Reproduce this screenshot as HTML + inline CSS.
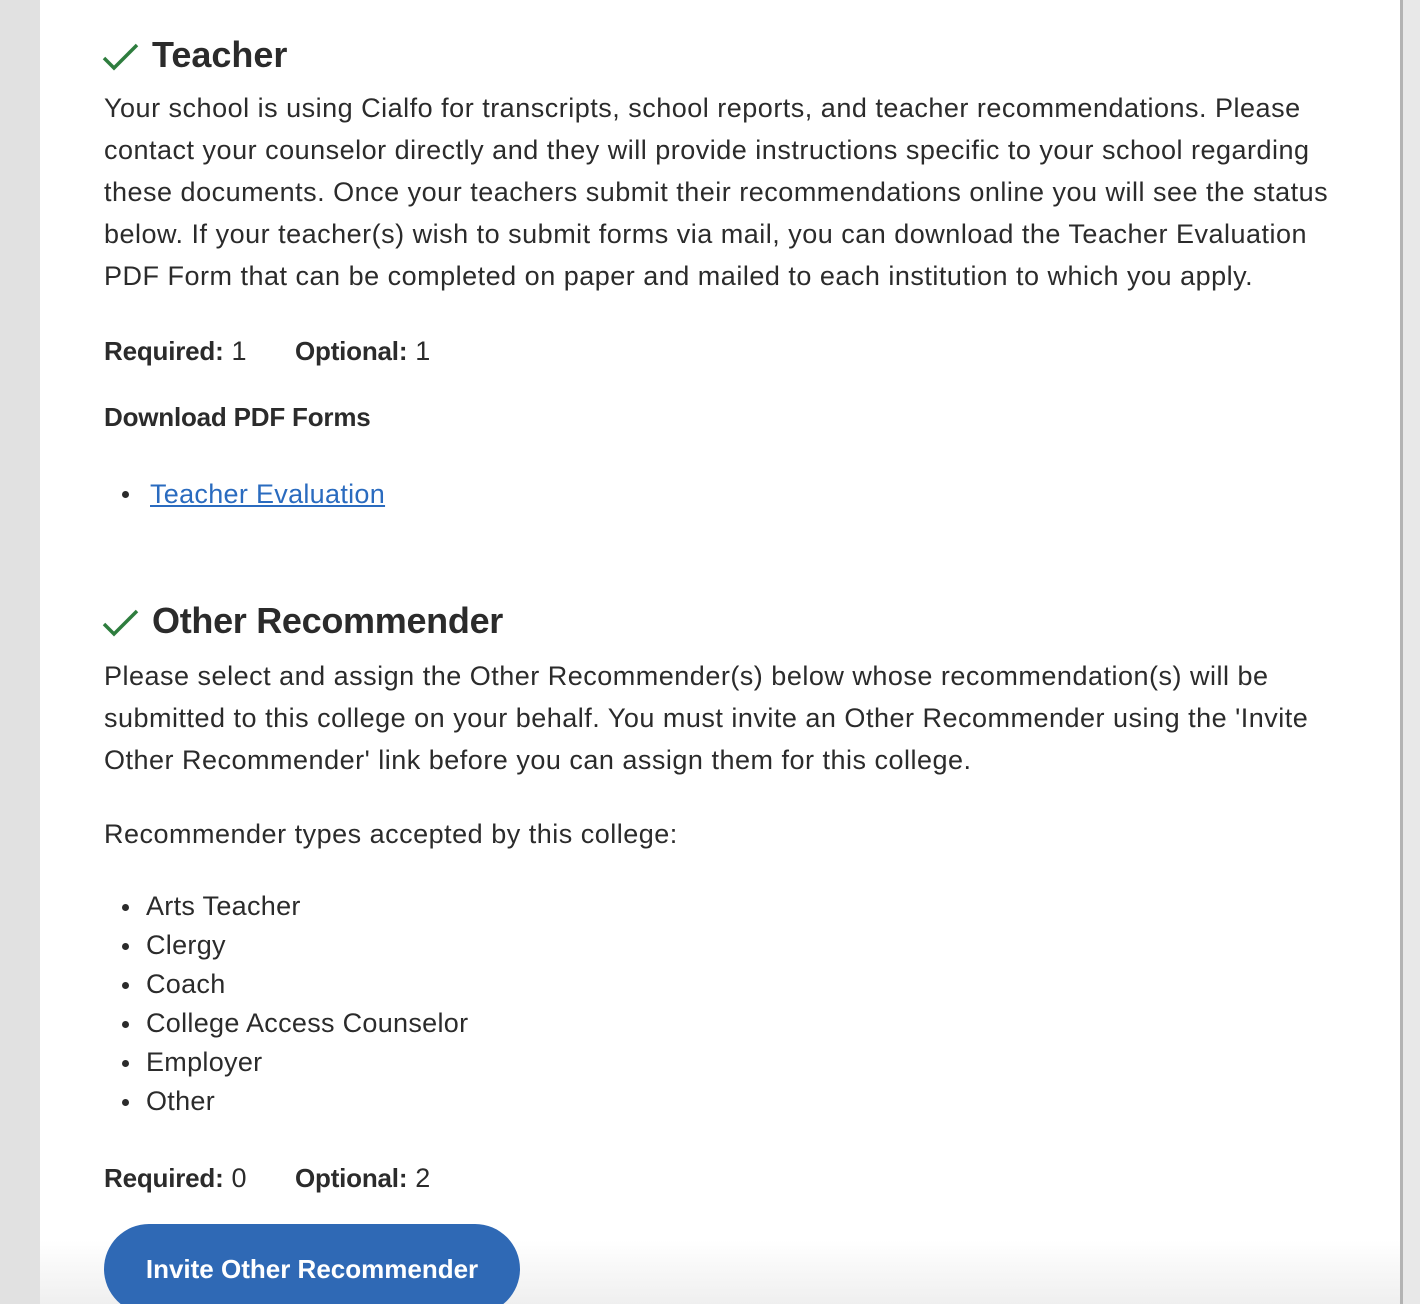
<!DOCTYPE html>
<html style="overflow:hidden"><head><meta charset="utf-8"><style>
*{margin:0;padding:0;box-sizing:border-box}
html,body{width:1420px;height:1304px;overflow:hidden}
body{background:#e8e8e8;font-family:"Liberation Sans",Arial,sans-serif;color:#2b2b2b;position:relative}
.l{position:absolute;left:0;width:40px;top:0;height:1304px;background:#e1e1e1}
.m{position:absolute;left:40px;width:1360px;top:0;height:1304px;background:linear-gradient(#fff 0,#fff 1240px,#efefef 1304px)}
.r{position:absolute;left:1400px;width:3px;top:0;height:1304px;background:#b3b3b3}
.t{position:absolute;left:104px;white-space:nowrap;font-size:27px;letter-spacing:0.5px;line-height:42px}
h2{position:absolute;left:152px;font-size:36px;letter-spacing:-0.3px;font-weight:bold;white-space:nowrap;line-height:44px;color:#2b2b2b}
b{font-weight:bold;font-size:26px;letter-spacing:-0.2px}
.ck{position:absolute;left:102px}
.li{position:absolute;left:146px;white-space:nowrap;font-size:27px;letter-spacing:0.3px;line-height:39px}
.dot{position:absolute;left:122px;width:7px;height:7px;border-radius:50%;background:#2b2b2b}
a{color:#2a6bbf;text-decoration:underline}
.btn{position:absolute;left:104px;top:1224px;width:416px;height:90px;border-radius:45px;background:#2f69b5;color:#fff;font-weight:bold;font-size:26px;text-align:center;line-height:90px;overflow:hidden}
</style></head><body>
<div class="l"></div><div class="m"></div><div class="r"></div>
<svg class="ck" style="top:42px" width="38" height="30" viewBox="0 0 38 30"><path d="M2 16 L12 26 L35 3" fill="none" stroke="#2e7d3e" stroke-width="3.5"/></svg>
<h2 style="top:33px;letter-spacing:0">Teacher</h2>
<div class="t" style="top:87px">Your school is using Cialfo for transcripts, school reports, and teacher recommendations. Please</div>
<div class="t" style="top:129px">contact your counselor directly and they will provide instructions specific to your school regarding</div>
<div class="t" style="top:171px">these documents. Once your teachers submit their recommendations online you will see the status</div>
<div class="t" style="top:213px">below. If your teacher(s) wish to submit forms via mail, you can download the Teacher Evaluation</div>
<div class="t" style="top:255px">PDF Form that can be completed on paper and mailed to each institution to which you apply.</div>
<div class="t" style="top:330px"><b>Required:</b> 1</div>
<div class="t" style="top:330px;left:295px"><b>Optional:</b> 1</div>
<div class="t" style="top:396px"><b>Download PDF Forms</b></div>
<div class="dot" style="top:491px"></div>
<div class="li" style="top:475px;left:150px"><a>Teacher Evaluation</a></div>
<svg class="ck" style="top:608px" width="38" height="30" viewBox="0 0 38 30"><path d="M2 16 L12 26 L35 3" fill="none" stroke="#2e7d3e" stroke-width="3.5"/></svg>
<h2 style="top:599px">Other Recommender</h2>
<div class="t" style="top:655px">Please select and assign the Other Recommender(s) below whose recommendation(s) will be</div>
<div class="t" style="top:697px">submitted to this college on your behalf. You must invite an Other Recommender using the 'Invite</div>
<div class="t" style="top:739px">Other Recommender' link before you can assign them for this college.</div>
<div class="t" style="top:813px">Recommender types accepted by this college:</div>
<div class="dot" style="top:904px"></div><div class="li" style="top:887px">Arts Teacher</div>
<div class="dot" style="top:943px"></div><div class="li" style="top:926px">Clergy</div>
<div class="dot" style="top:982px"></div><div class="li" style="top:965px">Coach</div>
<div class="dot" style="top:1021px"></div><div class="li" style="top:1004px">College Access Counselor</div>
<div class="dot" style="top:1060px"></div><div class="li" style="top:1043px">Employer</div>
<div class="dot" style="top:1099px"></div><div class="li" style="top:1082px">Other</div>
<div class="t" style="top:1157px"><b>Required:</b> 0</div>
<div class="t" style="top:1157px;left:295px"><b>Optional:</b> 2</div>
<div class="btn">Invite Other Recommender</div>
</body></html>
